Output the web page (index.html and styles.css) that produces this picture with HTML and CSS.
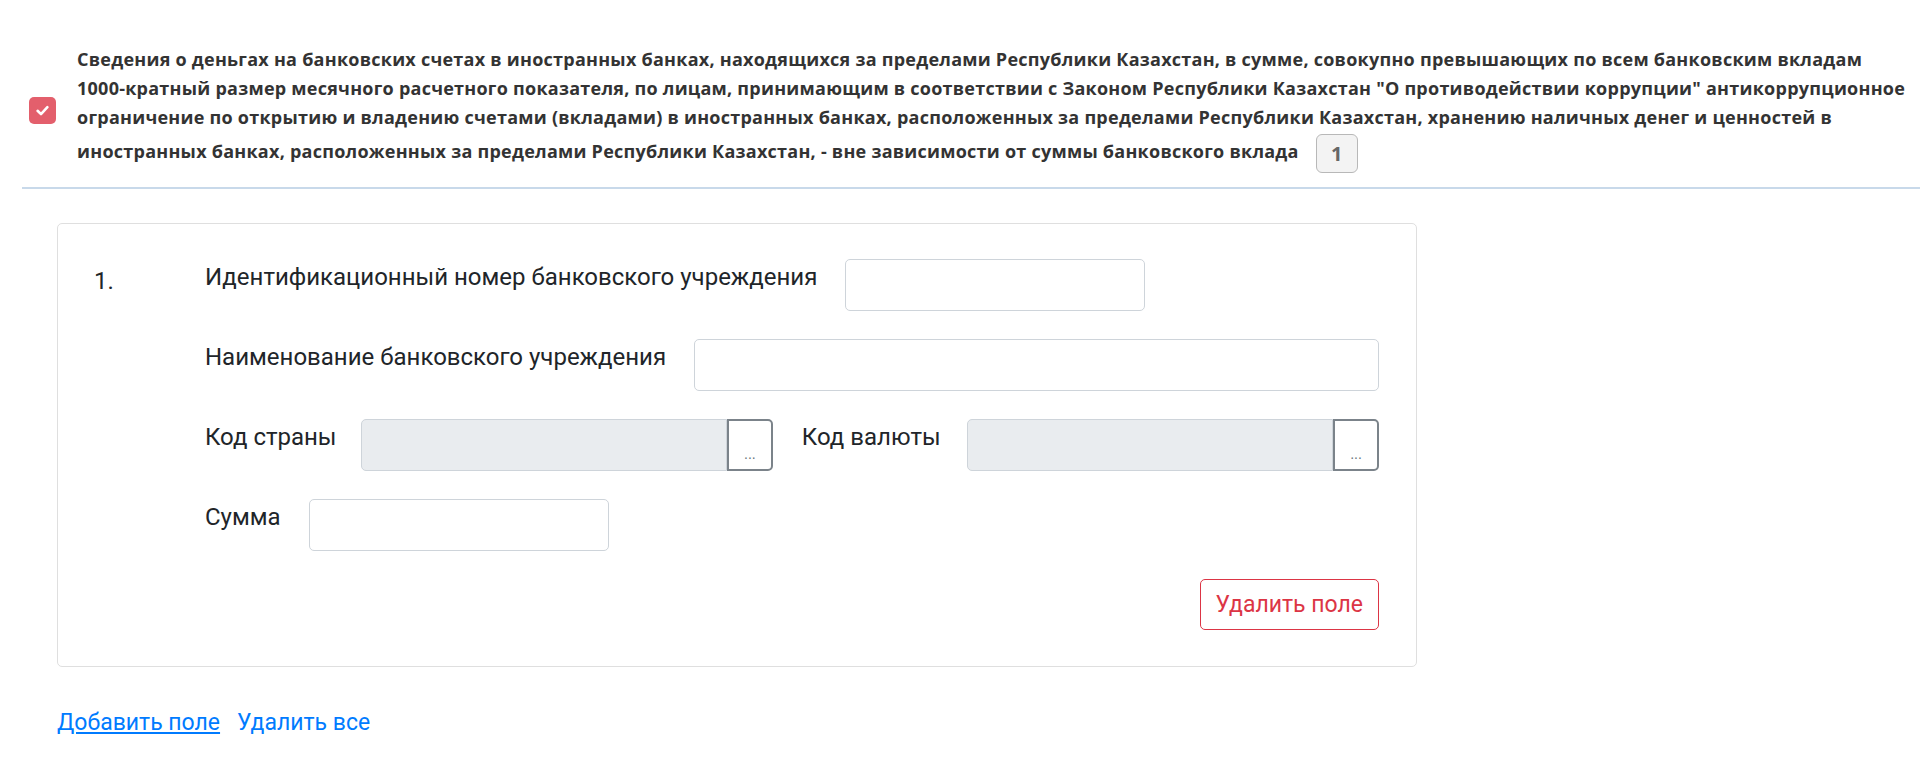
FILE: index.html
```html
<!DOCTYPE html>
<html lang="ru">
<head>
    <meta charset="UTF-8">
    <meta name="viewport" content="width=device-width, initial-scale=1.0">
    <title>Сведения о банковских счетах</title>
    <link rel="stylesheet" href="styles.css">
</head>
<body>
    <!-- Заголовок раздела с отметкой -->
    <div class="section-head">
        <span class="check">
            <svg width="27" height="27" viewBox="0 0 27 27">
                <rect x="0" y="0" width="27" height="27" rx="5" fill="#e35f6c"/>
                <path d="M8.6 13.8 L12 17.1 L18.4 10.2" fill="none" stroke="#fff" stroke-width="2.6" stroke-linecap="round" stroke-linejoin="round"/>
            </svg>
        </span>
        <p class="section-title">Сведения о деньгах на банковских счетах в иностранных банках, находящихся за пределами Республики Казахстан, в сумме, совокупно превышающих по всем банковским вкладам<br>1000-кратный размер месячного расчетного показателя, по лицам, принимающим в соответствии с Законом Республики Казахстан "О противодействии коррупции" антикоррупционное<br>ограничение по открытию и владению счетами (вкладами) в иностранных банках, расположенных за пределами Республики Казахстан, хранению наличных денег и ценностей в<br>иностранных банках, расположенных за пределами Республики Казахстан, - вне зависимости от суммы банковского вклада <span class="count">1</span></p>
    </div>

    <div class="fields">
        <!-- Карточка поля -->
        <div class="field-card">
            <div class="field-num">1.</div>
            <div class="field-rows">
                <div class="field-row">
                    <label class="field-label">Идентификационный номер банковского учреждения</label>
                    <input type="text" class="form-input short">
                </div>
                <div class="field-row">
                    <label class="field-label">Наименование банковского учреждения</label>
                    <input type="text" class="form-input wide">
                </div>
                <div class="field-row">
                    <label class="field-label first">Код страны</label>
                    <div class="picker">
                        <input type="text" class="form-input" readonly>
                        <button class="picker-btn">...</button>
                    </div>
                    <label class="field-label second">Код валюты</label>
                    <div class="picker">
                        <input type="text" class="form-input" readonly>
                        <button class="picker-btn">...</button>
                    </div>
                </div>
                <div class="field-row">
                    <label class="field-label">Сумма</label>
                    <input type="text" class="form-input short">
                </div>
                <div class="field-actions">
                    <button class="btn-remove">Удалить поле</button>
                </div>
            </div>
        </div>

        <div class="links">
            <a href="#" class="link underline">Добавить поле</a>
            <a href="#" class="link">Удалить все</a>
        </div>
    </div>
</body>
</html>
```

FILE: styles.css
```css
body {
    margin: 0;
    font-family: Roboto, "Noto Sans", sans-serif;
    color: #212529;
    background-color: #fff;
    overflow: hidden;
}
.section-head {
    display: flex;
    align-items: center;
    margin-left: 22px;
    padding: 45px 0 12px 7px;
    border-bottom: 2px solid #c8d9ea;
}
.check {
    flex: none;
    display: flex;
    margin-right: 21px;
}
.section-title {
    margin: 0;
    white-space: nowrap;
    font-family: "Open Sans", sans-serif;
    font-weight: bold;
    font-size: 18px;
    letter-spacing: 0.25px;
    line-height: 29px;
    color: #333;
}
.count {
    display: inline-block;
    vertical-align: middle;
    width: 40px;
    height: 37px;
    margin: 2px 0 2px 12px;
    border: 1px solid #b8b8b8;
    border-radius: 6px;
    background-color: #f3f3f3;
    color: #666;
    font-size: 20px;
    letter-spacing: 0;
    line-height: 37px;
    text-align: center;
}
.fields {
    padding: 34px 0 0 57px;
}
.field-card {
    display: flex;
    width: 1360px;
    box-sizing: border-box;
    padding: 35px 37px 36px 36px;
    border: 1px solid #dfdfdf;
    border-radius: 5px;
}
.field-num {
    flex: none;
    width: 111px;
    padding-top: 4px;
    font-size: 24px;
    line-height: 36px;
}
.field-rows {
    flex: 1;
    display: flex;
    flex-direction: column;
    gap: 28px;
}
.field-row {
    display: flex;
    align-items: flex-start;
}
.field-label {
    flex: none;
    padding-top: 0;
    margin-right: 28px;
    font-size: 24px;
    line-height: 36px;
}
.field-label.first {
    margin-right: 24px;
}
.field-label.second {
    margin-left: 29px;
    margin-right: 26px;
}
.form-input {
    box-sizing: border-box;
    height: 52px;
    padding: 8px 14px;
    border: 1px solid #ced4da;
    border-radius: 5px;
    font-family: inherit;
    font-size: 20px;
    background-color: #fff;
}
.form-input.short {
    width: 300px;
}
.form-input.wide {
    flex: 1;
}
.form-input[readonly] {
    background-color: #e9ecef;
}
.picker {
    flex: 1;
    display: flex;
}
.picker .form-input {
    flex: 1;
    min-width: 0;
    border-radius: 5px 0 0 5px;
}
.picker-btn {
    width: 46px;
    height: 52px;
    padding: 18px 0 0;
    border: 2px solid #7b838a;
    border-radius: 0 5px 5px 0;
    background-color: #fff;
    color: #6c757d;
    font-size: 14px;
    cursor: pointer;
}
.field-actions {
    display: flex;
    justify-content: flex-end;
}
.btn-remove {
    height: 51px;
    padding: 0 15px;
    border: 1px solid #dc3545;
    border-radius: 5px;
    background-color: #fff;
    color: #dc3545;
    font-family: inherit;
    font-size: 23px;
    cursor: pointer;
}
.btn-remove:hover {
    background-color: #dc3545;
    color: #fff;
}
.links {
    display: flex;
    gap: 17px;
    padding-top: 42px;
    font-size: 23px;
}
.link {
    color: #007bff;
    text-decoration: none;
}
.link.underline {
    text-decoration: underline;
}
```
